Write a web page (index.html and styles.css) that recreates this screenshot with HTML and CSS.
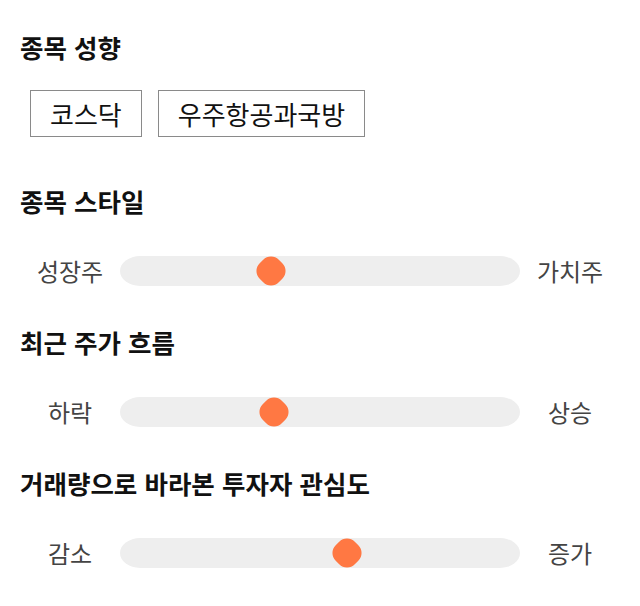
FILE: index.html
```html
<!DOCTYPE html>
<html lang="ko">
<head>
<meta charset="utf-8">
<title>종목 성향</title>
<link rel="stylesheet" href="styles.css">
</head>
<body>
<main class="page">
  <section class="section">
    <h2 class="title">종목 성향</h2>
    <div class="tags">
      <span class="tag">코스닥</span>
      <span class="tag">우주항공과국방</span>
    </div>
  </section>
  <section class="section">
    <h2 class="title">종목 스타일</h2>
    <div class="slider">
      <span class="label">성장주</span>
      <div class="track"><span class="thumb" style="left: 37.75%"></span></div>
      <span class="label">가치주</span>
    </div>
  </section>
  <section class="section">
    <h2 class="title">최근 주가 흐름</h2>
    <div class="slider">
      <span class="label">하락</span>
      <div class="track"><span class="thumb" style="left: 38.5%"></span></div>
      <span class="label">상승</span>
    </div>
  </section>
  <section class="section">
    <h2 class="title">거래량으로 바라본 투자자 관심도</h2>
    <div class="slider">
      <span class="label">감소</span>
      <div class="track"><span class="thumb" style="left: 56.75%"></span></div>
      <span class="label">증가</span>
    </div>
  </section>
</main>
</body>
</html>
```

FILE: styles.css
```css
html, body {
  margin: 0;
  padding: 0;
  background: #ffffff;
}

body {
  font-family: "Noto Sans CJK KR", "Noto Sans", sans-serif;
  color: #111111;
}

.page {
  padding: 32px 20px 0;
  display: flex;
  flex-direction: column;
}

.section {
  display: flex;
  flex-direction: column;
}

.section + .section {
  margin-top: 41px;
}

.section:nth-child(2) {
  margin-top: 49px;
}

.title {
  margin: 0;
  font-size: 25.5px;
  font-weight: 700;
  line-height: 30px;
  color: #111111;
}

.tags {
  display: flex;
  gap: 16px;
  padding-left: 10px;
  margin-top: 28px;
}

.tag {
  display: flex;
  align-items: center;
  height: 47px;
  box-sizing: border-box;
  padding: 0 19px;
  border: 1px solid #8a8a8a;
  font-size: 26px;
  color: #111111;
}

.slider {
  display: flex;
  align-items: center;
  height: 30px;
  margin-top: 40px;
}

.label {
  width: 100px;
  text-align: center;
  font-size: 24px;
  color: #444444;
  line-height: 30px;
}

.track {
  position: relative;
  flex: 1;
  height: 30px;
  background: #eeeeee;
  border-radius: 20px / 15px;
}

.thumb {
  position: absolute;
  top: 50%;
  width: 27px;
  height: 27px;
  background: #ff7843;
  border-radius: 11px;
  transform: translate(-50%, -50%) rotate(45deg);
}
```
